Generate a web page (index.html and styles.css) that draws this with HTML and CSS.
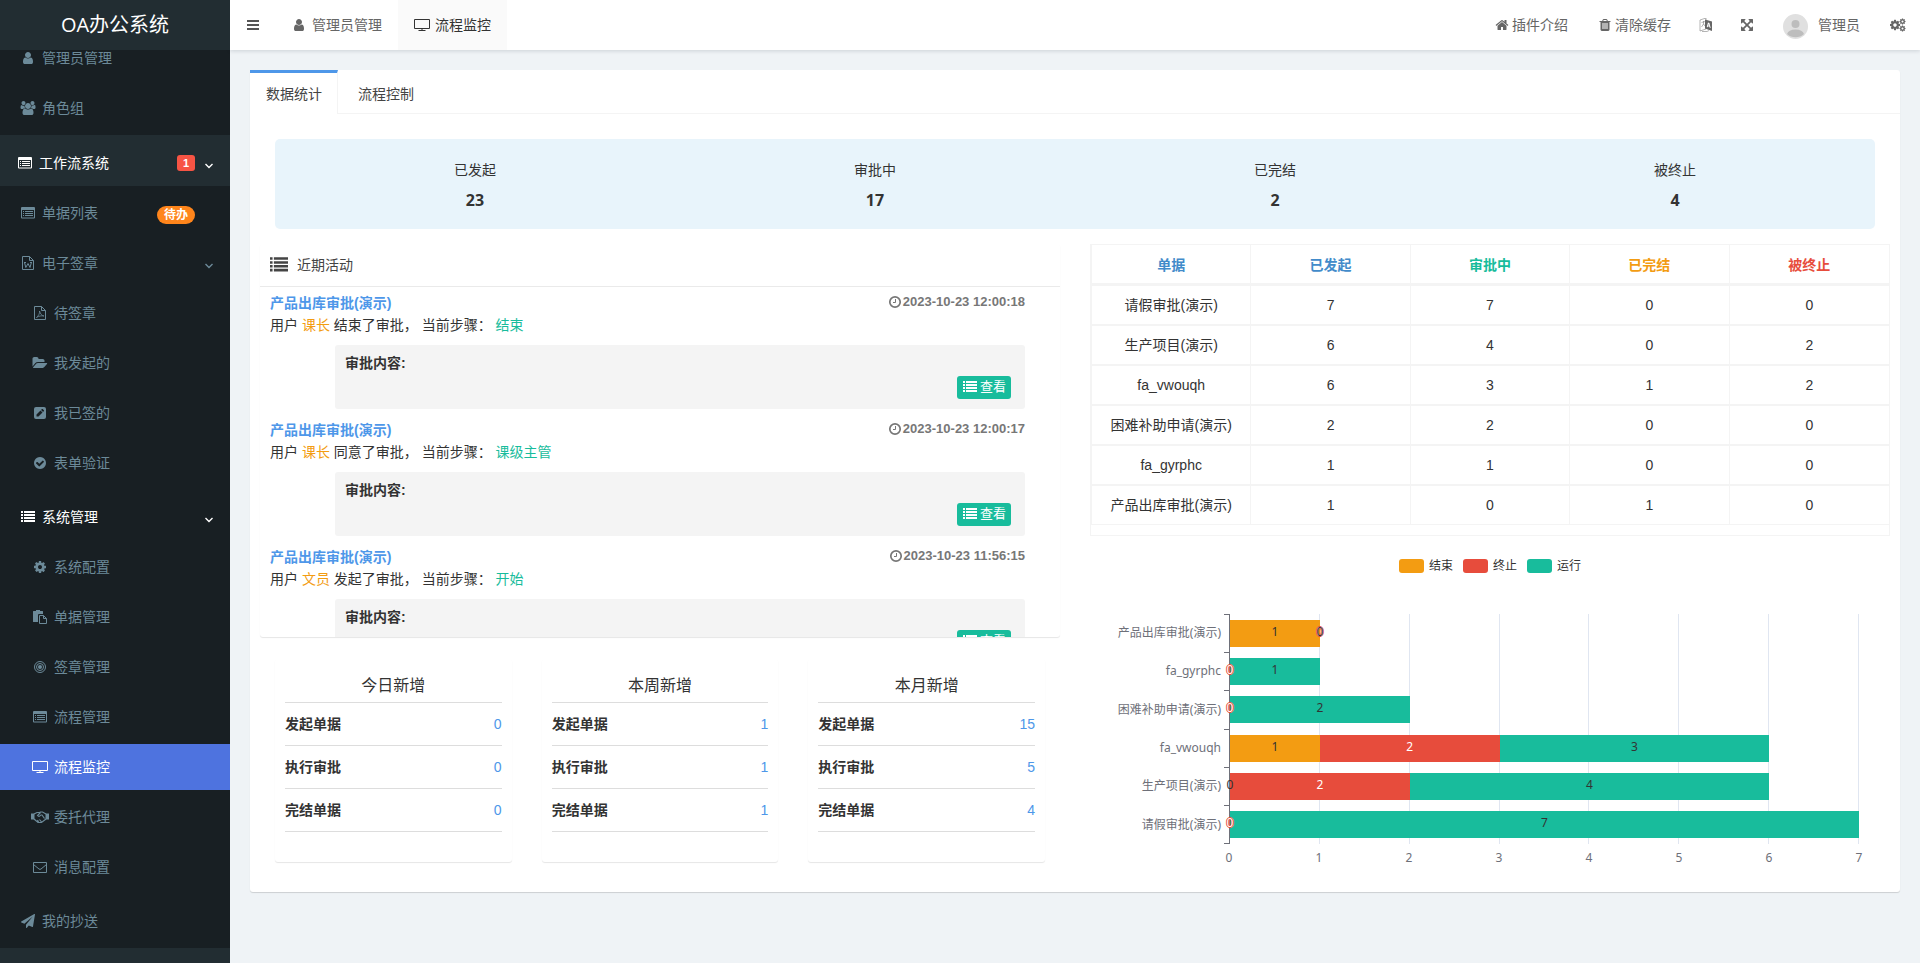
FILE: index.html
```html
<!DOCTYPE html>
<html lang="zh-CN">
<head>
    <meta charset="UTF-8">
    <meta name="viewport" content="width=device-width, initial-scale=1.0">
    <title>流程监控</title>
    <link rel="stylesheet" href="styles.css">
</head>
<body>
    <!-- icon sprite -->
    <svg class="sprite" aria-hidden="true">
        <symbol id="i-user" viewBox="0 0 1792 1792"><path d="M1536 1399q0 109-62.500 187t-150.500 78h-854q-88 0-150.500-78t-62.500-187q0-85 8.500-160.500t31.500-152 58.500-131 94-89 134.500-34.500q131 128 313 128t313-128q76 0 134.500 34.500t94 89 58.500 131 31.500 152 8.500 160.500zm-256-887q0 159-112.500 271.500t-271.500 112.500-271.500-112.500-112.500-271.500 112.500-271.500 271.500-112.500 271.500 112.500 112.500 271.500z"/></symbol>
        <symbol id="i-users" viewBox="0 0 2048 1792"><path d="M657 896q-162 5-265 128h-134q-82 0-138-40.500t-56-118.500q0-353 124-353 6 0 43.500 21t97.500 42.500 119 21.500q67 0 133-23-5 37-5 66 0 159 93 283zm1071 637q0 120-73 189.500t-194 69.500h-874q-121 0-194-69.500t-73-189.500q0-53 3.500-103.500t14-109 26.500-108.500 43-97.500 62-81 85.500-53.500 111.500-20q10 0 43 21.500t73 48 107 48 135 21.500 135-21.500 107-48 73-48 43-21.500q61 0 111.500 20t85.500 53.500 62 81 43 97.500 26.500 108.500 14 109 3.500 103.500zm-1024-1277q0 106-75 181t-181 75-181-75-75-181 75-181 181-75 181 75 75 181zm704 384q0 159-112.500 271.500t-271.500 112.500-271.500-112.500-112.500-271.500 112.500-271.500 271.500-112.500 271.500 112.500 112.500 271.500zm576 225q0 78-56 118.500t-138 40.500h-134q-103-123-265-128 93-124 93-283 0-29-5-66 66 23 133 23 59 0 119-21.500t97.500-42.500 43.500-21q124 0 124 353zm-128-609q0 106-75 181t-181 75-181-75-75-181 75-181 181-75 181 75 75 181z"/></symbol>
        <symbol id="i-list-alt" viewBox="0 0 14 14"><path fill-rule="evenodd" d="M1 1h12a1 1 0 0 1 1 1v9.500a1 1 0 0 1-1 1H1a1 1 0 0 1-1-1V2a1 1 0 0 1 1-1zm0 3v7.500h12V4zM2 5h1v1H2zm2 0h8v1H4zM2 7h1v1H2zm2 0h8v1H4zM2 9h1v1H2zm2 0h8v1H4z"/></symbol>
        <symbol id="i-list" viewBox="0 0 14 14"><path d="M0 1h2v2H0zm3 0h11v2H3zM0 4h2v2H0zm3 0h11v2H3zM0 7h2v2H0zm3 0h11v2H3zM0 10h2v2H0zm3 0h11v2H3z"/></symbol>
        <symbol id="i-word" viewBox="0 0 14 14"><path d="M1.500.500h7l4 4v9h-11zM8.500.500v4h4" fill="none" stroke="currentColor"/><path d="M3.500 6.500l1.300 5L7 7.500l2 4 1.400-5M3 6.500h2M9 6.500h2" fill="none" stroke="currentColor"/></symbol>
        <symbol id="i-pdf" viewBox="0 0 14 14"><path d="M1.500.500h7l4 4v9h-11zM8.500.500v4h4" fill="none" stroke="currentColor"/><path d="M3.500 11.500C5.500 10 7 7 6.500 5c1 3 2 4.500 4.500 5-3-.500-5 0-7.500 1.500z" fill="none" stroke="currentColor" stroke-width=".8"/></symbol>
        <symbol id="i-folder" viewBox="0 0 2048 1792"><path d="M1943 952q0 31-31 66l-336 396q-43 51-120.500 86.500t-143.500 35.500h-1088q-34 0-60.500-13t-26.500-43q0-31 31-66l336-396q43-51 120.500-86.500t143.500-35.500h1088q34 0 60.500 13t26.500 43zm-343-344v160h-832q-94 0-197 47.500t-164 119.500l-337 396-5 6q0-4-.5-12.500t-.5-12.500v-960q0-92 66-158t158-66h320q92 0 158 66t66 158v32h544q92 0 158 66t66 158z"/></symbol>
        <symbol id="i-pencil" viewBox="0 0 14 14"><path fill-rule="evenodd" d="M3 1h8a2 2 0 0 1 2 2v8a2 2 0 0 1-2 2H3a2 2 0 0 1-2-2V3a2 2 0 0 1 2-2zm.500 7.500v2h2L9.500 6.500l-2-2zM8.100 3.900l2 2 .800-.800q.400-.400 0-.800l-1.200-1.200q-.400-.400-.800 0z"/></symbol>
        <symbol id="i-check" viewBox="0 0 1792 1792"><path d="M1412 734q0-28-18-46l-91-90q-19-19-45-19t-45 19l-408 407-226-226q-19-19-45-19t-45 19l-91 90q-18 18-18 46 0 27 18 45l362 362q19 19 45 19 27 0 46-19l543-543q18-18 18-45zm252 162q0 209-103 385.500t-279.500 279.500-385.500 103-385.500-103-279.500-279.500-103-385.500 103-385.500 279.500-279.500 385.500-103 385.500 103 279.500 279.500 103 385.500z"/></symbol>
        <symbol id="i-cog" viewBox="0 0 1792 1792"><path d="M1152 896q0-106-75-181t-181-75-181 75-75 181 75 181 181 75 181-75 75-181zm512-109v222q0 12-8 23t-20 13l-185 28q-19 54-39 91 35 50 107 138 10 12 10 25t-9 23q-27 37-99 108t-94 71q-12 0-26-9l-138-108q-44 23-91 38-16 136-29 186-7 28-36 28h-222q-14 0-24.500-8.500t-11.500-21.500l-28-184q-49-16-90-37l-141 107q-10 9-25 9-14 0-25-11-126-114-165-168-7-10-7-23 0-12 8-23 15-21 51-66.500t54-70.500q-27-50-41-99l-183-27q-13-2-21-12.500t-8-23.500v-222q0-12 8-23t19-13l186-28q14-46 39-92-40-57-107-138-10-12-10-24 0-10 9-23 26-36 98.500-107.500t94.500-71.500q13 0 26 10l138 107q44-23 91-38 16-136 29-186 7-28 36-28h222q14 0 24.500 8.500t11.500 21.500l28 184q49 16 90 37l142-107q9-9 24-9 13 0 25 10 129 119 165 170 7 8 7 22 0 12-8 23-15 21-51 66.500t-54 70.500q26 50 41 98l183 28q13 2 21 12.500t8 23.500z"/></symbol>
        <symbol id="i-cogs" viewBox="0 0 16 14"><use href="#i-cog" x="-1" y="1" width="12" height="12"/><use href="#i-cog" x="9" y="0" width="7" height="7"/><use href="#i-cog" x="9" y="7" width="7" height="7"/></symbol>
        <symbol id="i-paste" viewBox="0 0 14 14"><path d="M0 1.500Q0 1 .500 1H3V0h4v1h2.500q.500 0 .500.500V4H6Q5 4 5 5v7H.500q-.500 0-.500-.500z"/><path d="M6.500 5.500h4l3 3v5h-7zM10.500 5.500v3h3" fill="none" stroke="currentColor"/></symbol>
        <symbol id="i-target" viewBox="0 0 14 14"><circle cx="7" cy="7" r="5.500" fill="none" stroke="currentColor"/><circle cx="7" cy="7" r="3.500" fill="none" stroke="currentColor"/><circle cx="7" cy="7" r="2"/></symbol>
        <symbol id="i-screen" viewBox="0 0 16 14"><path d="M.500 1.500h15v9H.500zM8 10.500v2M4.500 12.500h7" fill="none" stroke="currentColor"/></symbol>
        <symbol id="i-shake" viewBox="0 0 18 14"><path d="M0 3.500h3.500v6H0zM14.500 3.500H18v6h-3.500z"/><path d="M3 4l3-1.500h2.500L9.500 2h2L15 4M3 9l4 3.500h3.500L15 9M9.500 2.500L6.500 5.500q1.500 2 3.500-.5l1 0 2.500 3.500M7.500 12l-1-2M10.500 12L8.500 9.500" fill="none" stroke="currentColor" stroke-width="1.200"/></symbol>
        <symbol id="i-mail" viewBox="0 0 14 14"><path d="M.500 2.500h13v10H.500zM.500 4.500L6 9q1 .800 2 0l5.500-4.500" fill="none" stroke="currentColor"/></symbol>
        <symbol id="i-plane" viewBox="0 0 1792 1792"><path d="M1764 11q33 24 27 64l-256 1536q-5 29-32 45-14 8-31 8-11 0-24-5l-453-185-242 295q-18 23-49 23-13 0-22-4-19-7-30.500-23.500t-11.500-36.500v-349l864-1059-1069 925-395-162q-37-14-40-55-2-40 32-59l1664-960q15-9 32-9 20 0 36 11z"/></symbol>
        <symbol id="i-down" viewBox="0 0 8 6"><path d="M.500 1L4 4.500 7.500 1" fill="none" stroke="currentColor" stroke-width="1.400"/></symbol>
        <symbol id="i-bars" viewBox="0 0 14 14"><path d="M1 2h12v2H1zm0 4h12v2H1zm0 4h12v2H1z"/></symbol>
        <symbol id="i-home" viewBox="0 0 1792 1792"><path d="M1472 992v480q0 26-19 45t-45 19h-384v-384h-256v384h-384q-26 0-45-19t-19-45v-480l576-477 575 474q1 2 1 6zm223-69l-62 74q-8 9-21 11h-3q-13 0-21-7l-692-577-692 577q-12 8-24 7-13-2-21-11l-62-74q-8-10-7-23.500t11-21.500l719-599q32-26 76-26t76 26l244 204v-195q0-14 9-23t23-9h192q14 0 23 9t9 23v408l219 182q10 8 11 21.500t-7 23.500z"/></symbol>
        <symbol id="i-trash" viewBox="0 0 1792 1792"><path d="M704 1376v-704q0-14-9-23t-23-9h-64q-14 0-23 9t-9 23v704q0 14 9 23t23 9h64q14 0 23-9t9-23zm256 0v-704q0-14-9-23t-23-9h-64q-14 0-23 9t-9 23v704q0 14 9 23t23 9h64q14 0 23-9t9-23zm256 0v-704q0-14-9-23t-23-9h-64q-14 0-23 9t-9 23v704q0 14 9 23t23 9h64q14 0 23-9t9-23zm-544-992h448l-48-117q-7-9-17-11h-317q-10 2-17 11zm928 32v64q0 14-9 23t-23 9h-96v948q0 83-47 143.500t-113 60.500h-832q-66 0-113-58.500t-47-141.500v-952h-96q-14 0-23-9t-9-23v-64q0-14 9-23t23-9h309l70-167q15-37 54-63t79-26h320q40 0 79 26t54 63l70 167h309q14 0 23 9t9 23z"/></symbol>
        <symbol id="i-lang" viewBox="0 0 14 14"><path d="M1 2l6-2v11l-6 2zM2.500 4.500l3.500-1M4.500 3v3L2.500 9M4.500 6L6 8M3 13.500h5l2-1" fill="none" stroke="currentColor" stroke-width=".7" opacity=".7"/><path fill-rule="evenodd" d="M6 1.500l7 2v9.500L6 10.500zm3 3L7.700 9l1 .3.300-1 1.500.400.200 1.100 1 .3L10.400 5zM9.700 6l.5 1.700-.900-.300z"/></symbol>
        <symbol id="i-full" viewBox="0 0 1792 1792"><path d="M1411 541l-355 355 355 355 144-144q29-31 70-14 39 17 39 59v448q0 26-19 45t-45 19h-448q-42 0-59-40-17-39 14-69l144-144-355-355-355 355 144 144q31 30 14 69-17 40-59 40h-448q-26 0-45-19t-19-45v-448q0-42 40-59 39-17 69 14l144 144 355-355-355-355-144 144q-19 19-45 19-12 0-24-5-40-17-40-59v-448q0-26 19-45t45-19h448q42 0 59 40 17 39-14 69l-144 144 355 355 355-355-144-144q-31-30-14-69 17-40 59-40h448q26 0 45 19t19 45v448q0 42-39 59-13 5-25 5-26 0-45-19z"/></symbol>
        <symbol id="i-clock" viewBox="0 0 14 14"><circle cx="7" cy="7" r="5.200" fill="none" stroke="currentColor" stroke-width="1.700"/><path d="M7.500 4v3.500H5" fill="none" stroke="currentColor"/></symbol>
    </svg>

    <aside class="sidebar">
        <a href="#" class="logo">OA办公系统</a>
        <nav class="menu-wrap">
            <ul class="menu menu-top">
                <li><a href="#" class="item sub"><svg class="icon"><use href="#i-user"/></svg>管理员管理</a></li>
                <li><a href="#" class="item sub"><svg class="icon"><use href="#i-users"/></svg>角色组</a></li>
            </ul>
            <a href="#" class="item root"><svg class="icon"><use href="#i-list-alt"/></svg>工作流系统<span class="label label-red">1</span><svg class="arrow"><use href="#i-down"/></svg></a>
            <ul class="menu">
                <li><a href="#" class="item sub"><svg class="icon"><use href="#i-list-alt"/></svg>单据列表<span class="label label-orange">待办</span></a></li>
                <li>
                    <a href="#" class="item sub"><svg class="icon"><use href="#i-word"/></svg>电子签章<svg class="arrow"><use href="#i-down"/></svg></a>
                    <ul class="submenu">
                        <li><a href="#" class="item leaf"><svg class="icon"><use href="#i-pdf"/></svg>待签章</a></li>
                        <li><a href="#" class="item leaf"><svg class="icon"><use href="#i-folder"/></svg>我发起的</a></li>
                        <li><a href="#" class="item leaf"><svg class="icon"><use href="#i-pencil"/></svg>我已签的</a></li>
                        <li><a href="#" class="item leaf"><svg class="icon"><use href="#i-check"/></svg>表单验证</a></li>
                    </ul>
                </li>
                <li>
                    <a href="#" class="item sub open"><svg class="icon"><use href="#i-list"/></svg>系统管理<svg class="arrow"><use href="#i-down"/></svg></a>
                    <ul class="submenu">
                        <li><a href="#" class="item leaf"><svg class="icon"><use href="#i-cog"/></svg>系统配置</a></li>
                        <li><a href="#" class="item leaf"><svg class="icon"><use href="#i-paste"/></svg>单据管理</a></li>
                        <li><a href="#" class="item leaf"><svg class="icon"><use href="#i-target"/></svg>签章管理</a></li>
                        <li><a href="#" class="item leaf"><svg class="icon"><use href="#i-list-alt"/></svg>流程管理</a></li>
                        <li><a href="#" class="item leaf active"><svg class="icon"><use href="#i-screen"/></svg>流程监控</a></li>
                        <li><a href="#" class="item leaf"><svg class="icon wide"><use href="#i-shake"/></svg>委托代理</a></li>
                        <li><a href="#" class="item leaf"><svg class="icon"><use href="#i-mail"/></svg>消息配置</a></li>
                    </ul>
                </li>
                <li><a href="#" class="item sub"><svg class="icon"><use href="#i-plane"/></svg>我的抄送</a></li>
            </ul>
        </nav>
    </aside>

    <div class="main">
        <header class="header">
            <button type="button" class="toggle" aria-label="菜单"><svg class="icon"><use href="#i-bars"/></svg></button>
            <nav class="nav-tabs">
                <a href="#"><svg class="icon"><use href="#i-user"/></svg>管理员管理</a>
                <a href="#" class="active"><svg class="icon"><use href="#i-screen"/></svg>流程监控</a>
            </nav>
            <nav class="nav-right">
                <a href="#"><svg class="icon"><use href="#i-home"/></svg>插件介绍</a>
                <a href="#"><svg class="icon"><use href="#i-trash"/></svg>清除缓存</a>
                <a href="#" aria-label="语言"><svg class="icon"><use href="#i-lang"/></svg></a>
                <a href="#" aria-label="全屏"><svg class="icon"><use href="#i-full"/></svg></a>
                <a href="#" class="user">
                    <svg class="avatar" viewBox="0 0 25 25"><circle cx="12.500" cy="12.500" r="12.500" fill="#e0e0e0"/><circle cx="12.500" cy="10" r="4" fill="#bdbdbd"/><path d="M4 20q1.500-4.500 8.500-4.500T21 20a12.500 12.500 0 0 1-17 0z" fill="#bdbdbd"/></svg>管理员</a>
                <a href="#" aria-label="设置"><svg class="icon"><use href="#i-cogs"/></svg></a>
            </nav>
        </header>

        <main class="panel">
            <div class="panel-tabs">
                <a href="#" class="active">数据统计</a>
                <a href="#">流程控制</a>
            </div>
            <div class="panel-body">
                <div class="stats">
                    <div>已发起<strong>23</strong></div>
                    <div>审批中<strong>17</strong></div>
                    <div>已完结<strong>2</strong></div>
                    <div>被终止<strong>4</strong></div>
                </div>

                <div class="columns">
                    <div class="col">
                        <section class="activity">
                            <h3 class="activity-head"><svg class="icon"><use href="#i-list"/></svg>近期活动</h3>
                            <div class="activity-list">
                                <article>
                                    <div class="line"><a href="#">产品出库审批(演示)</a><time><svg class="icon"><use href="#i-clock"/></svg>2023-10-23 12:00:18</time></div>
                                    <p>用户 <span class="orange">课长</span> 结束了审批， 当前步骤： <span class="green">结束</span></p>
                                    <div class="comment"><b>审批内容:</b><button type="button" class="btn"><svg class="icon"><use href="#i-list"/></svg>查看</button></div>
                                </article>
                                <article>
                                    <div class="line"><a href="#">产品出库审批(演示)</a><time><svg class="icon"><use href="#i-clock"/></svg>2023-10-23 12:00:17</time></div>
                                    <p>用户 <span class="orange">课长</span> 同意了审批， 当前步骤： <span class="green">课级主管</span></p>
                                    <div class="comment"><b>审批内容:</b><button type="button" class="btn"><svg class="icon"><use href="#i-list"/></svg>查看</button></div>
                                </article>
                                <article>
                                    <div class="line"><a href="#">产品出库审批(演示)</a><time><svg class="icon"><use href="#i-clock"/></svg>2023-10-23 11:56:15</time></div>
                                    <p>用户 <span class="orange">文员</span> 发起了审批， 当前步骤： <span class="green">开始</span></p>
                                    <div class="comment"><b>审批内容:</b><button type="button" class="btn"><svg class="icon"><use href="#i-list"/></svg>查看</button></div>
                                </article>
                            </div>
                        </section>

                        <div class="cards">
                            <section class="card">
                                <h4>今日新增</h4>
                                <div class="row"><b>发起单据</b><a href="#">0</a></div>
                                <div class="row"><b>执行审批</b><a href="#">0</a></div>
                                <div class="row"><b>完结单据</b><a href="#">0</a></div>
                            </section>
                            <section class="card">
                                <h4>本周新增</h4>
                                <div class="row"><b>发起单据</b><a href="#">1</a></div>
                                <div class="row"><b>执行审批</b><a href="#">1</a></div>
                                <div class="row"><b>完结单据</b><a href="#">1</a></div>
                            </section>
                            <section class="card">
                                <h4>本月新增</h4>
                                <div class="row"><b>发起单据</b><a href="#">15</a></div>
                                <div class="row"><b>执行审批</b><a href="#">5</a></div>
                                <div class="row"><b>完结单据</b><a href="#">4</a></div>
                            </section>
                        </div>
                    </div>

                    <div class="col">
                        <div class="table-wrap">
                            <table>
                                <thead>
                                    <tr><th>单据</th><th>已发起</th><th class="green">审批中</th><th class="orange">已完结</th><th class="red">被终止</th></tr>
                                </thead>
                                <tbody>
                                    <tr><td>请假审批(演示)</td><td>7</td><td>7</td><td>0</td><td>0</td></tr>
                                    <tr><td>生产项目(演示)</td><td>6</td><td>4</td><td>0</td><td>2</td></tr>
                                    <tr><td>fa_vwouqh</td><td>6</td><td>3</td><td>1</td><td>2</td></tr>
                                    <tr><td>困难补助申请(演示)</td><td>2</td><td>2</td><td>0</td><td>0</td></tr>
                                    <tr><td>fa_gyrphc</td><td>1</td><td>1</td><td>0</td><td>0</td></tr>
                                    <tr><td>产品出库审批(演示)</td><td>1</td><td>0</td><td>1</td><td>0</td></tr>
                                </tbody>
                            </table>
                        </div>

                        <!-- stacked bar chart, bar widths are value / 7 -->
                        <div class="chart">
                            <div class="legend">
                                <span><i class="s-end"></i>结束</span>
                                <span><i class="s-stop"></i>终止</span>
                                <span><i class="s-run"></i>运行</span>
                            </div>
                            <div class="plot">
                                <div class="names">
                                    <span>产品出库审批(演示)</span>
                                    <span>fa_gyrphc</span>
                                    <span>困难补助申请(演示)</span>
                                    <span>fa_vwouqh</span>
                                    <span>生产项目(演示)</span>
                                    <span>请假审批(演示)</span>
                                </div>
                                <div class="ticks"><i></i><i></i><i></i><i></i><i></i><i></i></div>
                                <div class="area">
                                    <div class="grid-lines"><i></i><i></i><i></i><i></i><i></i><i></i><i></i></div>
                                    <div class="bar"><span class="s-end" style="width:14.286%">1</span><span class="s-stop zero">0</span><span class="s-run zero">0</span></div>
                                    <div class="bar"><span class="s-end zero">0</span><span class="s-stop zero">0</span><span class="s-run" style="width:14.286%">1</span></div>
                                    <div class="bar"><span class="s-end zero">0</span><span class="s-stop zero">0</span><span class="s-run" style="width:28.571%">2</span></div>
                                    <div class="bar"><span class="s-end" style="width:14.286%">1</span><span class="s-stop" style="width:28.571%">2</span><span class="s-run" style="width:42.857%">3</span></div>
                                    <div class="bar"><span class="s-end zero">0</span><span class="s-stop" style="width:28.571%">2</span><span class="s-run" style="width:57.143%">4</span></div>
                                    <div class="bar"><span class="s-end zero">0</span><span class="s-stop zero">0</span><span class="s-run" style="width:100%">7</span></div>
                                </div>
                                <div class="scale"><span>0</span><span>1</span><span>2</span><span>3</span><span>4</span><span>5</span><span>6</span><span>7</span></div>
                            </div>
                        </div>
                    </div>
                </div>
            </div>
        </main>
    </div>
</body>
</html>
```

FILE: styles.css
```css
* {
    box-sizing: border-box;
}

body {
    margin: 0;
    display: flex;
    height: 100vh;
    overflow: hidden;
    background: #eff3f6;
    color: #333;
    font-family: "Liberation Sans", "Noto Sans CJK SC", sans-serif;
    font-size: 14px;
    line-height: 20px;
}

a {
    color: inherit;
    text-decoration: none;
}

ul, p, h3, h4 {
    margin: 0;
    padding: 0;
    list-style: none;
    font-weight: normal;
}

button {
    font: inherit;
    border: none;
    background: none;
    padding: 0;
}

.sprite {
    position: absolute;
    width: 0;
    height: 0;
}

.icon {
    flex: none;
    width: 16px;
    height: 14px;
    fill: currentColor;
}

.orange { color: #f39c12; }
.green { color: #18bc9c; }
.red { color: #e74c3c; }

/* sidebar */
.sidebar {
    flex: none;
    display: flex;
    flex-direction: column;
    width: 230px;
    background: #222d32;
}

.logo {
    position: relative;
    z-index: 1;
    flex: none;
    height: 50px;
    line-height: 50px;
    background: #222d32;
    color: #fff;
    font-family: "Open Sans", "Noto Sans CJK SC", sans-serif;
    font-size: 20px;
    text-align: center;
}

.menu-wrap {
    flex: 1;
    min-height: 0;
    overflow: hidden;
}

.menu {
    display: flow-root;
    padding-bottom: 4px;
    background: #181f23;
}

/* list is scrolled a little under the logo */
.menu-top {
    margin-top: -19px;
}

.submenu {
    padding-bottom: 4px;
}

.item {
    display: flex;
    align-items: center;
    height: 46px;
    margin-top: 4px;
    padding-right: 17px;
    color: #6c8a99;
}

.item .icon {
    margin: 0 6px 0 2px;
}

.item .icon.wide {
    width: 18px;
    margin: 0 5px 0 1px;
}

.item.root {
    height: 51px;
    margin: 0;
    padding-top: 4px;
    padding-left: 15px;
    background: #222d32;
    color: #fff;
}

.item.sub { padding-left: 18px; }
.item.leaf { padding-left: 30px; }
.item.open { color: #fff; }

.item.active {
    background: #4e73df;
    color: #fff;
}

.arrow {
    width: 8px;
    height: 6px;
    margin: 6px 0 0 auto;
}

.label {
    margin-left: auto;
    margin-right: 18px;
    color: #fff;
    font-weight: bold;
    font-size: 12px;
}

.label-red {
    padding: 0 6px;
    margin-right: 10px;
    border-radius: 3px;
    background: #f75444;
    font-size: 11px;
    line-height: 16px;
}

.label-red + .arrow {
    margin-left: 0;
}

.label-orange {
    padding: 0 7px;
    margin-top: 4px;
    border-radius: 9px;
    background: #ff851b;
    line-height: 18px;
}

/* top bar */
.main {
    flex: 1;
    min-width: 0;
}

.header {
    display: flex;
    height: 50px;
    background: #fff;
    box-shadow: 0 1px 4px rgba(0, 21, 41, .15);
    color: #666;
}

.toggle {
    width: 45px;
    padding: 4px 0 0;
    color: #555;
}

.nav-tabs, .nav-right {
    display: flex;
}

.nav-right {
    margin-left: auto;
}

.header a {
    display: flex;
    align-items: center;
    padding: 0 15px;
}

.nav-tabs a {
    padding: 0 16px;
}

.nav-tabs .icon {
    margin-right: 5px;
}

.nav-tabs .active {
    background: #fafafa;
    color: #333;
}

.nav-right .icon {
    width: 14px;
    margin-right: 3px;
}

.nav-right a:nth-child(3) .icon,
.nav-right a:nth-child(4) .icon {
    margin-right: 0;
}

.nav-right a:nth-child(3),
.nav-right a:nth-child(4) {
    padding: 0 14px 0 13px;
}

.nav-right a:last-child {
    padding-right: 14px;
}

.nav-right a:last-child .icon {
    width: 16px;
    margin-right: 0;
}

.avatar {
    width: 25px;
    height: 25px;
    margin: 3px 10px 0 0;
}

/* panel */
.panel {
    margin: 20px;
    border-radius: 3px;
    background: #fff;
    box-shadow: 0 1px 1px rgba(0, 0, 0, .15);
}

.panel-tabs {
    display: flex;
    height: 44px;
    border-bottom: 1px solid #f4f4f4;
}

.panel-tabs a {
    height: 44px;
    padding: 14px 16px 0 20px;
    color: #444;
}

.panel-tabs .active {
    padding: 11px 15px 0 16px;
    border-top: 3px solid #4e97e9;
    border-right: 1px solid #f4f4f4;
    background: #fff;
}

.panel-body {
    padding: 25px 10px 22px;
}

.stats {
    display: grid;
    grid-template-columns: repeat(4, 1fr);
    margin: 0 15px 15px;
    padding: 20px 0 18px;
    border-radius: 5px;
    background: #e8f4fb;
    text-align: center;
}

.stats div {
    line-height: 22px;
}

.stats strong {
    display: block;
    padding-top: 8px;
    font-family: "Open Sans", sans-serif;
    font-size: 16px;
}

.columns {
    display: grid;
    grid-template-columns: 1fr 1fr;
    gap: 30px;
}

.col {
    min-width: 0;
}

.activity, .card {
    border-radius: 3px;
    background: #fff;
    box-shadow: 0 1px 1px rgba(0, 0, 0, .1);
}

.activity-head {
    display: flex;
    align-items: center;
    height: 43px;
    padding-left: 10px;
    border-bottom: 1px solid #eaeaea;
    color: #444;
    font-size: 14px;
}

.activity-head .icon {
    width: 18px;
    height: 18px;
    margin-right: 9px;
}

.activity-list {
    height: 350px;
    overflow: hidden;
}

.activity-list article {
    padding: 5px 35px 5px 10px;
    line-height: 22px;
}

.line {
    display: flex;
    justify-content: space-between;
    font-weight: bold;
}

.line a {
    color: #4e97e9;
}

.line time {
    display: flex;
    align-items: center;
    height: 20px;
    color: #777;
    font-size: 13px;
}

.line .icon {
    width: 14px;
    margin-right: 1px;
}

.comment {
    margin: 9px 0 0 65px;
    padding: 8px 14px 10px 10px;
    border-radius: 3px;
    background: #f4f4f4;
    line-height: 20px;
}

.btn {
    display: flex;
    align-items: center;
    height: 23px;
    margin: 3px 0 0 auto;
    padding: 0 5px 2px 6px;
    border-radius: 3px;
    background: #18bc9c;
    color: #fff;
    font-size: 13px;
}

.btn .icon {
    width: 14px;
    margin-right: 3px;
}

.cards {
    display: grid;
    grid-template-columns: repeat(3, 1fr);
    gap: 30px;
    margin: 22px 15px 0;
}

.card {
    padding: 15px 10px 30px;
}

.card h4 {
    padding-bottom: 4px;
    border-bottom: 1px solid #ddd;
    font-size: 16px;
    line-height: 24px;
    text-align: center;
}

.row {
    display: flex;
    justify-content: space-between;
    padding: 11px 0;
    border-bottom: 1px solid #ddd;
}

.row a {
    color: #4e97e9;
}

/* table */
.table-wrap {
    padding-bottom: 10px;
    border: 1px solid #f4f4f4;
}

table {
    width: 100%;
    table-layout: fixed;
    border-collapse: separate;
    border-spacing: 0;
    border-left: 1px solid #f4f4f4;
}

th, td {
    height: 40px;
    padding: 0;
    border-right: 1px solid #f4f4f4;
    border-bottom: 2px solid #f4f4f4;
    text-align: center;
}

th {
    height: 41px;
    padding-top: 1px;
    border-bottom-width: 3px;
}

th:not([class]) {
    color: #428bca;
}

tr:last-child td {
    height: 39px;
    border-bottom-width: 1px;
}

th:last-child, td:last-child {
    border-right: none;
}

/* chart */
.chart {
    padding: 16px 31px 0 0;
    color: #6e7079;
    font-family: "Noto Sans", "Noto Sans CJK SC", sans-serif;
    font-size: 12px;
}

.legend {
    display: flex;
    justify-content: center;
    gap: 10px;
    padding-left: 31px;
    margin-bottom: 34px;
    color: #333;
    line-height: 28px;
}

.legend span {
    display: flex;
    align-items: center;
}

.legend i {
    width: 25px;
    height: 14px;
    margin-right: 5px;
    border-radius: 3px;
}

.s-end { background: #f39c12; }
.s-stop { background: #e74c3c; }
.s-run { background: #18bc9c; }

.plot {
    display: grid;
    grid-template-columns: 134px 5px 1fr;
    grid-template-rows: 230px 26px;
}

.names, .ticks, .area {
    display: grid;
    grid-template-rows: repeat(6, 1fr);
}

.names {
    padding-right: 3px;
    align-items: center;
    text-align: right;
}

.ticks {
    border-bottom: 1px solid #6e7079;
}

.ticks i {
    border-top: 1px solid #6e7079;
}

.area {
    position: relative;
    border-left: 1px solid #6e7079;
    align-items: center;
}

.grid-lines {
    position: absolute;
    inset: 0;
    display: grid;
    grid-template-columns: repeat(7, 1fr);
}

.grid-lines i {
    border-right: 1px solid #e0e6f1;
}

.bar {
    position: relative;
    display: flex;
    height: 27px;
    line-height: 24px;
    color: #333;
}

.bar span {
    display: flex;
    justify-content: center;
}

/* zero values have no bar, only a number on the boundary */
.bar .zero {
    z-index: 1;
    width: 0;
}

.bar .s-stop {
    color: #fff;
}

.bar .s-stop.zero {
    text-shadow: 1px 0 #e74c3c, -1px 0 #e74c3c, 0 1px #e74c3c, 0 -1px #e74c3c;
}

.scale {
    grid-column: 3;
    display: flex;
    justify-content: space-between;
    line-height: 28px;
}

.scale span {
    display: flex;
    justify-content: center;
    width: 0;
}
```
